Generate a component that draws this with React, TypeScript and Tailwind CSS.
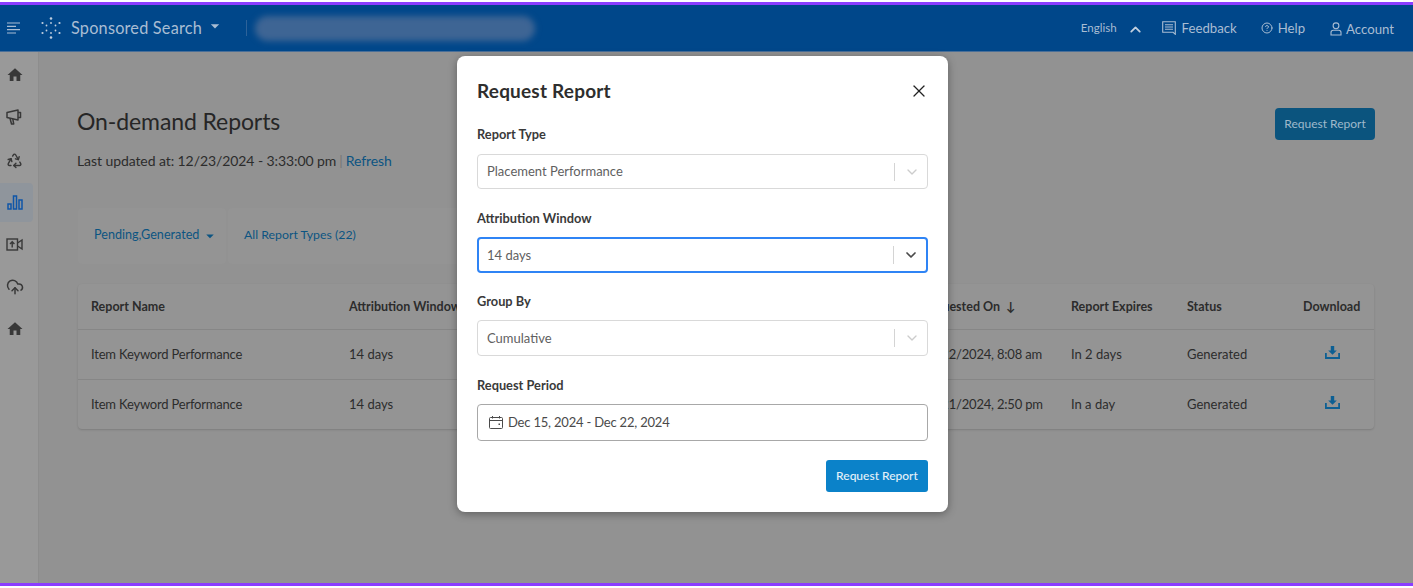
import { ChevronDown, ChevronUp, CircleHelp, CloudUpload, Recycle, X } from 'lucide-react'
import { MdArrowDropDown, MdHome } from 'react-icons/md'

const Logo = () => (
  <svg width="24" height="24" viewBox="0 0 24 24" fill="#c0cede">
    <circle cx="12" cy="2.5" r="1.3" />
    <circle cx="12" cy="7" r="0.9" />
    <circle cx="12" cy="17" r="0.9" />
    <circle cx="12" cy="21.5" r="1.3" />
    <circle cx="3.5" cy="7" r="1.1" />
    <circle cx="7.5" cy="9.5" r="0.9" />
    <circle cx="16.5" cy="9.5" r="0.9" />
    <circle cx="20.5" cy="7" r="1.1" />
    <circle cx="3.5" cy="17" r="1.1" />
    <circle cx="7.5" cy="14.5" r="0.9" />
    <circle cx="16.5" cy="14.5" r="0.9" />
    <circle cx="20.5" cy="17" r="1.1" />
  </svg>
)

const MenuIcon = () => (
  <svg width="14" height="12" viewBox="0 0 14 12" fill="none" stroke="#a9bdd3" strokeWidth="1.2">
    <path d="M0 1h13M0 4.300h9M0 7.600h13M0 11h9" />
  </svg>
)

const MegaphoneIcon = () => (
  <svg width="17" height="16" viewBox="0 0 17 16" fill="none" stroke="#383838" strokeWidth="1.500" strokeLinejoin="round">
    <path d="M1 3.500 12 1v10L1 8.500z" />
    <path d="M12 3.500h2.500v5H12" />
    <path d="M4 9.200 5.500 15h2.200L6.800 9.800" />
  </svg>
)

const BarsIcon = () => (
  <svg width="16" height="15" viewBox="0 0 16 15" fill="none" stroke="#0f56a8" strokeWidth="1.500">
    <rect x="1" y="9" width="3" height="5" />
    <rect x="6.500" y="1" width="3" height="13" />
    <rect x="12" y="5" width="3" height="9" />
  </svg>
)

const VideoIcon = () => (
  <svg width="17" height="13" viewBox="0 0 17 13" fill="none" stroke="#383838" strokeWidth="1.400">
    <rect x="1" y="1" width="10.500" height="11" />
    <path d="M11.500 5 16 2v9l-4.500-3" />
    <path d="M6.200 9.500V4M4 6l2.200-2.200L8.400 6" />
  </svg>
)

const FeedbackIcon = () => (
  <svg width="14" height="14" viewBox="0 0 14 14" fill="none" stroke="#a9bdd3" strokeWidth="1.100">
    <path d="M.7.7h12.600v12.600l-2.200-2H.7z" />
    <path d="M3 3.700h8M3 6h8M3 8.300h8" />
  </svg>
)

const AccountIcon = () => (
  <svg width="12" height="14" viewBox="0 0 12 14" fill="none" stroke="#a9bdd3" strokeWidth="1.100">
    <circle cx="6" cy="3.800" r="2.900" />
    <path d="M1 13v-2.500c0-1.400 1-2.300 2.300-2.300h5.400c1.300 0 2.300.9 2.300 2.300V13z" />
  </svg>
)

const DownloadIcon = () => (
  <svg width="15" height="13" viewBox="0 0 15 13" fill="#0c5f93">
    <path d="M5.800 0h3.400v4.500h2.600L7.500 8.800 3.200 4.500h2.600z" />
    <path d="M0 7h1.800v4h11.400V7H15v6H0z" />
  </svg>
)

const CalendarIcon = () => (
  <svg width="14" height="13" viewBox="0 0 14 13" fill="none" stroke="#4a4a4a" strokeWidth="1">
    <rect x=".5" y="1.500" width="13" height="11" rx="1" />
    <path d="M.5 4.500h13M3.500 0v2.500M10.500 0v2.500" />
    <rect x="9.500" y="7.500" width="1.500" height="1.500" fill="#4a4a4a" stroke="none" />
  </svg>
)

const sideIconClass = 'flex h-[42px] w-[29px] items-center justify-center text-[#383838]'

const Sidebar = () => (
  <div className="flex w-[39px] shrink-0 flex-col border-r border-[#8d8d8d] bg-[#999999] pt-[2px]">
    <div className={sideIconClass}><MdHome size={18} /></div>
    <div className={`${sideIconClass} pt-[1px] pb-px`}><MegaphoneIcon /></div>
    <div className={`${sideIconClass} mt-px`}><Recycle size={17} /></div>
    <div className="my-[1.500px] flex h-[39px] w-[33px] items-center justify-center rounded-r bg-[#8f959c] pr-[4px]"><BarsIcon /></div>
    <div className={sideIconClass}><VideoIcon /></div>
    <div className={`${sideIconClass} pt-[1px]`}><CloudUpload size={18} /></div>
    <div className={`${sideIconClass} mt-px`}><MdHome size={18} /></div>
  </div>
)

const Header = () => (
  <header className="flex h-[47px] shrink-0 items-center border-b border-[#4a6f98] bg-[#00478a] pl-[7px] pr-[19px] text-[#a9bdd3]">
    <MenuIcon />
    <div className="ml-[18px]"><Logo /></div>
    <span className="ml-[8px] text-[16.300px] tracking-[0.2px]">Sponsored Search</span>
    <MdArrowDropDown size={20} className="ml-[3px] mb-[4px]" />
    <div className="ml-[21px] h-[16px] w-px bg-[#2d6299]" />
    <div className="ml-[8px] h-[25px] w-[280px] rounded-full bg-[#3e6594] blur-[3px]" />
    <div className="ml-auto mt-[3px] flex items-center text-[13.200px]">
      <span className="mb-[3px] text-[11.500px]">English</span>
      <ChevronUp size={17} strokeWidth={2.500} className="ml-[10px] text-[#c3d0df]" />
      <div className="ml-[18px] mb-[2px] flex items-center gap-[6px]"><FeedbackIcon />Feedback</div>
      <div className="ml-[24px] mb-[2px] flex items-center gap-[5px]"><CircleHelp size={12} />Help</div>
      <div className="ml-[25px] flex items-center gap-[4px]"><AccountIcon />Account</div>
    </div>
  </header>
)

const rows = [
  { date: '12/22/2024, 8:08 am', expires: 'In 2 days' },
  { date: '12/21/2024, 2:50 pm', expires: 'In a day' },
]

const gridClass = 'grid grid-cols-[258px_1fr_150px_116px_116px_58px] items-center px-[13px]'

const ReportsTable = () => (
  <div className="mt-[20px] rounded-sm bg-[#949494] shadow-[0_1px_2px_rgba(0,0,0,0.15)]">
    <div className={`${gridClass} h-[46px] border-b border-[#868686] pt-[2px] text-[12.500px] font-bold text-[#2c2c2c]`}>
      <span>Report Name</span>
      <span className="whitespace-nowrap">Attribution Window</span>
      <span className="whitespace-nowrap">Requested On <span className="ml-[3px]">↓</span></span>
      <span>Report Expires</span>
      <span>Status</span>
      <span>Download</span>
    </div>
    {rows.map((row, i) => (
      <div key={row.date} className={`${gridClass} text-[13px] text-[#2c2c2c] ${i === 0 ? 'h-[50px] border-b border-[#868686] pt-[1px]' : 'h-[49px]'}`}>
        <span className="tracking-[-0.2px]">Item Keyword Performance</span>
        <span>14 days</span>
        <span className="whitespace-nowrap tracking-[-0.2px]">{row.date}</span>
        <span>{row.expires}</span>
        <span>Generated</span>
        <span className="mb-[5px] flex justify-center"><DownloadIcon /></span>
      </div>
    ))}
  </div>
)

const Main = () => (
  <main className="flex-1 bg-[#929292] pl-[39px] pr-[38px] pt-[53px]">
    <div className="flex items-start justify-between">
      <div className="-ml-px">
        <h1 className="text-[23px] leading-[32px] tracking-[-0.1px] text-[#262626]">On-demand Reports</h1>
        <p className="mt-[15px] text-[14px] leading-[18px] tracking-[-0.08px] text-[#2c2c2c]">
          Last updated at: 12/23/2024 - 3:33:00 pm
          <span className="mx-[3px] text-[#777777]">|</span>
          <span className="text-[#0c5482]">Refresh</span>
        </p>
      </div>
      <button className="mt-[3px] h-[32px] w-[100px] rounded bg-[#0b547e] text-[12px] text-[#9fb9cb]">Request Report</button>
    </div>
    <div className="mt-[38px] mr-px flex h-[56px] gap-[2px] text-[12.600px] text-[#0c5482]">
      <div className="flex w-[148px] items-center rounded-sm bg-[#949494] pb-px pl-[16px]">
        Pending,Generated
        <MdArrowDropDown size={18} className="ml-[2px]" />
      </div>
      <div className="flex w-[420px] items-center rounded-sm bg-[#949494] pb-px pl-[16px] text-[12.300px]">All Report Types (22)</div>
    </div>
    <div className="mr-px"><ReportsTable /></div>
  </main>
)

const Field = ({ label, children, className }: { label: string; children: React.ReactNode; className?: string }) => (
  <div className={className}>
    <label className="block text-[12.800px] font-bold leading-[18px] text-[#3a3a3a]">{label}</label>
    {children}
  </div>
)

const Select = ({ value, focused, className }: { value: string; focused?: boolean; className?: string }) => (
  <div
    className={`flex items-center rounded text-[13px] text-[#5f5f5f] ${className ?? 'mt-[10px] h-[36px]'} ${
      focused ? 'border-2 border-[#2f84f5] pl-[8px]' : 'border border-[#d9d9d9] pl-[9px]'
    }`}
  >
    <span className="flex-1 pt-px">{value}</span>
    <div className="h-[18px] w-px bg-[#d4d4d4]" />
    <ChevronDown size={16} strokeWidth={focused ? 2.500 : 2} className={`ml-[9px] mr-[7px] ${focused ? 'text-[#4a4a4a]' : 'text-[#cccccc]'}`} />
  </div>
)

const Modal = () => (
  <div className="absolute left-[457px] top-[56px] h-[456px] w-[491px] rounded-lg bg-white px-[20px] pt-[22px] shadow-[0_2px_8px_rgba(0,0,0,0.35)]">
    <div className="flex items-center justify-between">
      <h2 className="text-[19px] font-bold leading-[26px] tracking-[0.2px] text-[#2e2e2e]">Request Report</h2>
      <X size={20} strokeWidth={1.500} className="mr-[-1px] text-[#222222]" />
    </div>
    <Field label="Report Type" className="mt-[21px]"><Select value="Placement Performance" className="mt-[11px] h-[35px]" /></Field>
    <Field label="Attribution Window" className="mt-[20px]"><Select value="14 days" focused /></Field>
    <Field label="Group By" className="mt-[19px]"><Select value="Cumulative" /></Field>
    <Field label="Request Period" className="mt-[20px]">
      <div className="mt-[10px] flex h-[37px] items-center gap-[5px] rounded border border-[#a8a8a8] pl-[11px] text-[13px] tracking-[-0.2px] text-[#4a4a4a]">
        <CalendarIcon />
        Dec 15, 2024 - Dec 22, 2024
      </div>
    </Field>
    <div className="mt-[19px] flex justify-end">
      <button className="h-[32px] w-[102px] rounded-[3px] bg-[#0b82c9] text-[12px] font-medium text-[#e4f1f9]">Request Report</button>
    </div>
  </div>
)

export default function App() {
  return (
    <div className="relative h-[588px] w-[1413px] overflow-hidden bg-white py-[2px] font-['Lato',sans-serif]">
      <div className="flex h-[584px] flex-col border-y-[3px] border-[#8b3dff]">
        <Header />
        <div className="flex min-h-0 flex-1">
          <Sidebar />
          <Main />
        </div>
      </div>
      <Modal />
    </div>
  )
}
